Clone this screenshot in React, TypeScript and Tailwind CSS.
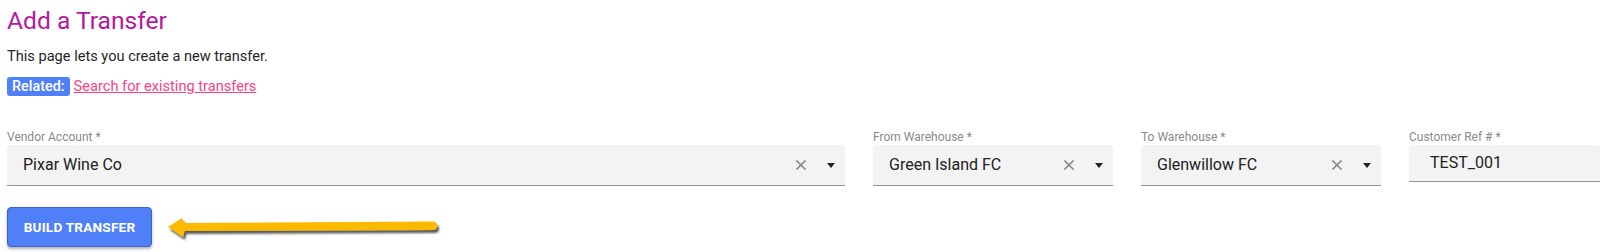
import React from "react";

function ClearIcon() {
  return (
    <svg width="10" height="10" viewBox="0 0 10 10" className="shrink-0">
      <path d="M1 1 L9 9 M9 1 L1 9" stroke="#8a8a8a" strokeWidth="1.6" strokeLinecap="square" />
    </svg>
  );
}

function CaretIcon() {
  return (
    <svg width="8" height="5" viewBox="0 0 8 5" className="shrink-0">
      <polygon points="0,0 8,0 4,5" fill="#222" />
    </svg>
  );
}

function SelectField({ label, value }: { label: string; value: string }) {
  return (
    <div className="flex flex-col min-w-0">
      <div className="text-[12px] leading-[16px] text-[#8a8a8a]">{label}</div>
      <div className="h-[41px] bg-[#f3f3f3] rounded-t-[4px] border-b border-[#949494] flex items-center pl-[16px] pr-[10px]">
        <span className="flex-1 text-[16px] text-[#212121] truncate">{value}</span>
        <ClearIcon />
        <span className="w-[21px]" />
        <CaretIcon />
      </div>
    </div>
  );
}

function Arrow() {
  return (
    <svg width="290" height="36" viewBox="0 0 290 36" className="shrink-0 overflow-visible">
      <defs>
        <filter id="sh" x="-10%" y="-50%" width="120%" height="200%">
          <feDropShadow dx="2" dy="3" stdDeviation="1.3" floodColor="#000" floodOpacity="0.65" />
        </filter>
      </defs>
      <path
        d="M8,18 L22,9 L24.5,14 L273,12.5 A4.25,4.25 0 0 1 273,21 L24.5,22 L23,28 Z"
        fill="#fbb900"
        filter="url(#sh)"
      />
    </svg>
  );
}

export default function App() {
  return (
    <div className="[font-family:Roboto,'Liberation_Sans',sans-serif] bg-white w-[1609px] h-[252px] pl-[7px] pr-[9px] pt-[5px]">
      <h1 className="text-[24.6px] leading-[32px] text-[#b4189f] font-normal">Add a Transfer</h1>
      <p className="mt-[9px] text-[14.6px] leading-[20px] text-[#262626]">This page lets you create a new transfer.</p>
      <div className="mt-[11px] flex items-center gap-[4px] text-[14.4px]">
        <span className="h-[19px] leading-[19px] px-[5px] rounded-[3px] bg-[#4f80f7] text-white font-medium">Related:</span>
        <a href="#" className="text-[#f7437f] underline leading-[19px] text-[14.6px]">Search for existing transfers</a>
      </div>
      <div className="mt-[33px] grid grid-cols-[1fr_240px_240px_191px] gap-x-[28px] items-start">
        <SelectField label="Vendor Account *" value="Pixar Wine Co" />
        <SelectField label="From Warehouse *" value="Green Island FC" />
        <SelectField label="To Warehouse *" value="Glenwillow FC" />
        <div className="flex flex-col">
          <div className="text-[12px] leading-[16px] text-[#8a8a8a]">Customer Ref # *</div>
          <div className="h-[37px] bg-[#f3f3f3] rounded-t-[4px] border-b border-[#949494] flex items-center pl-[21px]">
            <span className="text-[16px] text-[#212121]">TEST_001</span>
          </div>
        </div>
      </div>
      <div className="mt-[21px] flex items-center gap-[8px]">
        <button className="h-[40px] w-[145px] rounded-[4px] bg-[#4f80f7] border border-[#3d62c9] shadow-[0_2px_3px_rgba(0,0,0,0.3)] text-white text-[13.6px] font-bold tracking-[0.2px]">
          BUILD TRANSFER
        </button>
        <Arrow />
      </div>
    </div>
  );
}
